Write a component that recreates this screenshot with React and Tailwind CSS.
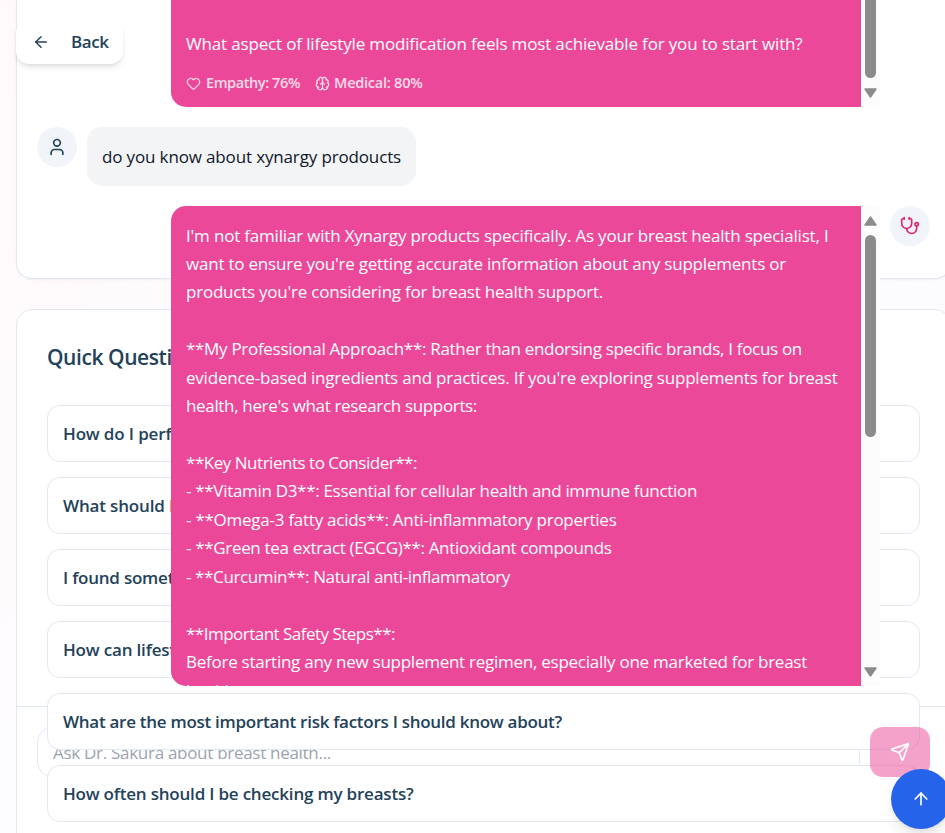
import { useLayoutEffect, useRef } from "react";
import { ArrowLeft, ArrowUp, Brain, Heart, Send, Stethoscope, User } from "lucide-react";

// Spreads one line of text over a given width by adjusting its tracking.
function Fit({ w, children }) {
  const ref = useRef(null);
  useLayoutEffect(() => {
    const el = ref.current;
    el.style.letterSpacing = "0px";
    const natural = el.getBoundingClientRect().width;
    el.style.letterSpacing = `${(w - natural) / children.length}px`;
  }, [w, children]);
  return (
    <span ref={ref} className="inline-block whitespace-pre">
      {children}
    </span>
  );
}

function Arrow({ down }) {
  return (
    <svg width="13" height="10" viewBox="0 0 13 10" className={down ? "rotate-180" : ""}>
      <path d="M6.5 1 L12 9 H1 Z" fill="#8b8b8b" stroke="#8b8b8b" strokeWidth="1.4" strokeLinejoin="round" />
    </svg>
  );
}

const reply = [
  ["I'm not familiar with Xynargy products specifically. As your breast health specialist, I", 642.5],
  ["want to ensure you're getting accurate information about any supplements or", 600],
  ["products you're considering for breast health support.", 417],
  null,
  ["**My Professional Approach**: Rather than endorsing specific brands, I focus on", 616],
  ["evidence-based ingredients and practices. If you're exploring supplements for breast", 651.5],
  ["health, here's what research supports:", 291],
  null,
  ["**Key Nutrients to Consider**:", 231],
  ["- **Vitamin D3**: Essential for cellular health and immune function", 511],
  ["- **Omega-3 fatty acids**: Anti-inflammatory properties", 430.5],
  ["- **Green tea extract (EGCG)**: Antioxidant compounds", 425.5],
  ["- **Curcumin**: Natural anti-inflammatory", 324],
  null,
  ["**Important Safety Steps**:", 209],
  ["Before starting any new supplement regimen, especially one marketed for breast", 621],
  ["health.", 53],
];

const questions = [
  ["How do I perform", 142],
  ["What should I", 111],
  ["I found something", 146],
  ["How can lifestyle", 136],
  ["What are the most important risk factors I should know about?", 499],
  ["How often should I be checking my breasts?", 350.5],
];

export default function App() {
  return (
    <div className="relative h-[833px] w-[945px] overflow-hidden bg-gradient-to-br from-[#fff9fb] via-[#fdfcfe] to-[#f9f8ff] pl-4 font-['Open_Sans','Noto_Sans',sans-serif] text-[17px] text-[#23425a]">
      <section className="h-[279px] w-[935px] rounded-b-2xl border border-t-0 border-[#e2e8f0] bg-white shadow-xs">
        <div className="flex flex-col gap-5 px-5 pb-5">
          <div className="relative z-20 ml-[134px] flex h-[107px] w-[709px]">
            <div className="flex-1 rounded-bl-[15px] bg-[#ec4899] px-[15px] pt-[29px] text-white">
              <div className="h-[29px] leading-[29px]">
                <Fit w={616.5}>What aspect of lifestyle modification feels most achievable for you to start with?</Fit>
              </div>
              <div className="mt-[13px] flex h-6 items-center text-[14.5px] font-[550] opacity-80">
                <Heart size={15} className="mr-[5px]" />
                <Fit w={94}>Empathy: 76%</Fit>
                <Brain size={15} className="mr-1 ml-[15px]" />
                <Fit w={88.5}>Medical: 80%</Fit>
              </div>
            </div>
            <div className="flex w-[19px] flex-col items-center bg-[#fcfcfc]">
              <div className="mb-[10px] h-[78px] w-[11px] rounded-b-full bg-[#8b8b8b]" />
              <Arrow down />
            </div>
          </div>

          <div className="flex gap-[10px]">
            <div className="flex size-10 items-center justify-center rounded-full bg-[#f1f5f9]">
              <User size={20} />
            </div>
            <div className="h-[59px] w-[329px] rounded-[15px] bg-[#f3f4f6] px-[15px] leading-[59px] text-[#0f172a]">
              <Fit w={299}>do you know about xynargy prodoucts</Fit>
            </div>
          </div>

          <div className="relative z-20 ml-[134px] flex gap-[10px]">
            <div className="flex h-[480px] w-[709px]">
              <div className="flex-1 overflow-hidden rounded-l-[15px] bg-[#ec4899] px-[15px] pt-[15.5px] text-white">
                {reply.map((line, i) => (
                  <div key={i} className="h-[28.4375px] leading-[28.4375px]">
                    {line && <Fit w={line[1]}>{line[0]}</Fit>}
                  </div>
                ))}
              </div>
              <div className="flex w-[19px] flex-col items-center bg-[#fcfcfc] pt-[10px] pb-[9px]">
                <Arrow />
                <div className="mt-[9px] h-[202px] w-[11px] rounded-full bg-[#8b8b8b]" />
                <div className="flex-1" />
                <Arrow down />
              </div>
            </div>
            <div className="flex size-10 items-center justify-center rounded-full bg-[#f1f5f9] text-[#db2777]">
              <Stethoscope size={20} />
            </div>
          </div>
        </div>

        <form className="relative z-0 flex h-[71px] border-t border-[#e2e8f0] px-5 pt-5">
          <div className="h-[50px] w-[823px] rounded-[15px] border border-[#e2e8f0] px-[15px] pt-px leading-[48px] text-[#9ca3af]">
            <Fit w={278}>Ask Dr. Sakura about breast health...</Fit>
          </div>
        </form>
        <div className="relative z-30 -mt-[50px] flex justify-end pr-5">
          <button type="button" className="flex h-[50px] w-[60px] items-center justify-center rounded-[13px] bg-[#ec4899] text-white opacity-50">
            <Send size={20} />
          </button>
        </div>
      </section>

      <section className="mt-[30px] h-[600px] w-[935px] rounded-2xl border border-[#e2e8f0] bg-white p-[30px]">
        <h2 className="mb-[30px] h-[35px] text-[21px] leading-[35px] font-semibold">
          <Fit w={160}>Quick Questions</Fit>
        </h2>
        <div className="flex flex-col gap-[15px]">
          {questions.map(([text, w]) => (
            <button key={text} type="button" className="relative z-10 h-[57px] rounded-[13px] border border-[#e2e8f0] bg-white px-[15px] pt-px text-left font-[550]">
              <Fit w={w}>{text}</Fit>
            </button>
          ))}
        </div>
      </section>

      <button type="button" className="absolute top-5 left-4 z-40 flex h-11 w-[107px] items-center rounded-[13px] bg-white pl-4 font-semibold shadow-md">
        <ArrowLeft size={18} className="mr-[21px]" />
        <Fit w={37.5}>Back</Fit>
      </button>
      <button type="button" className="absolute top-[769px] left-[891px] z-40 flex size-[60px] items-center justify-center rounded-full bg-[#2563eb] text-white shadow-lg">
        <ArrowUp size={20} />
      </button>
    </div>
  );
}
